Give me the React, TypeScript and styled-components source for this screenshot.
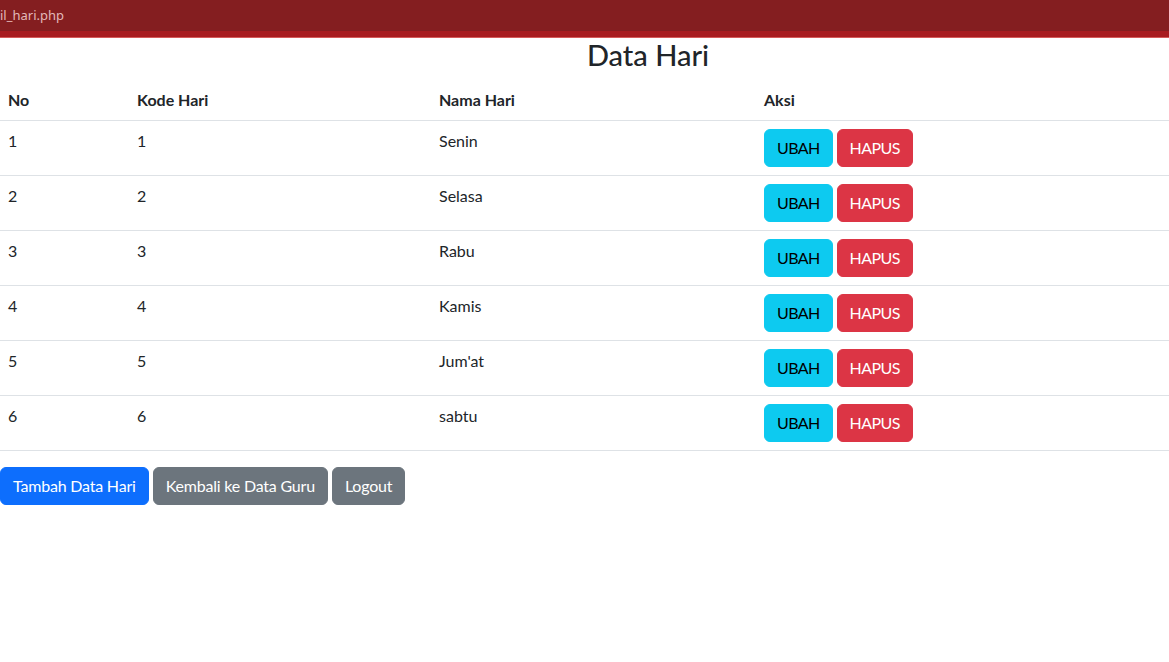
import React from "react";
import styled, { createGlobalStyle } from "styled-components";

const Global = createGlobalStyle`
  html, body { margin: 0; padding: 0; background: #fff; }
  body {
    font-family: Lato, "Noto Sans", sans-serif;
    color: #212529;
    overflow: hidden;
  }
`;

const Viewport = styled.div`
  width: 1169px;
  height: 662px;
  overflow: hidden;
  background: #fff;
`;

const TitleBar = styled.div`
  height: 31px;
  background: #841e20;
  display: flex;
  align-items: center;
  padding-bottom: 2px;
  box-sizing: border-box;
`;

const TitleText = styled.span`
  font-family: "Noto Sans", sans-serif;
  font-size: 13px;
  color: #e2b9b9;
`;

const TabStrip = styled.div`
  height: 6px;
  background: #a81c20;
  border-bottom: 1px solid #d65a5a;
`;

const Container = styled.div`
  width: 1296px;
`;

const Heading = styled.h3`
  margin: 0 0 8px;
  text-align: center;
  font-size: 29px;
  font-weight: 500;
  line-height: 34px;
  color: #212529;
`;

const Table = styled.table`
  width: 100%;
  border-collapse: collapse;
  margin-bottom: 16px;
  font-size: 16px;
  line-height: 24px;
`;

const Th = styled.th<{ $w?: number }>`
  text-align: left;
  font-weight: 700;
  padding: 8px;
  border-bottom: 1px solid #dee2e6;
  width: ${(p) => (p.$w ? `${p.$w}px` : "auto")};
  box-sizing: border-box;
`;

const Td = styled.td`
  padding: 8px;
  vertical-align: top;
  border-bottom: 1px solid #dee2e6;
`;

const Actions = styled.div`
  display: flex;
  gap: 4px;
`;

const Btn = styled.button<{ $bg: string; $fg: string; $tight?: boolean }>`
  font-family: inherit;
  font-size: 16px;
  line-height: 24px;
  padding: 6px 12px;
  border: 1px solid ${(p) => p.$bg};
  border-radius: 6px;
  background: ${(p) => p.$bg};
  color: ${(p) => p.$fg};
  cursor: pointer;
  letter-spacing: ${(p) => (p.$tight ? "-0.6px" : "-0.2px")};
`;

const Footer = styled.div`
  display: flex;
  gap: 4px;
`;

const rows = [
  ["1", "1", "Senin"],
  ["2", "2", "Selasa"],
  ["3", "3", "Rabu"],
  ["4", "4", "Kamis"],
  ["5", "5", "Jum'at"],
  ["6", "6", "sabtu"],
];

export default function App() {
  return (
    <Viewport>
      <Global />
      <TitleBar>
        <TitleText>il_hari.php</TitleText>
      </TitleBar>
      <TabStrip />
      <Container>
        <Heading>Data Hari</Heading>
        <Table>
          <thead>
            <tr>
              <Th $w={129}>No</Th>
              <Th $w={302}>Kode Hari</Th>
              <Th $w={325}>Nama Hari</Th>
              <Th>Aksi</Th>
            </tr>
          </thead>
          <tbody>
            {rows.map((r) => (
              <tr key={r[0]}>
                <Td>{r[0]}</Td>
                <Td>{r[1]}</Td>
                <Td>{r[2]}</Td>
                <Td>
                  <Actions>
                    <Btn $bg="#0dcaf0" $fg="#000" $tight>UBAH</Btn>
                    <Btn $bg="#dc3545" $fg="#fff" $tight>HAPUS</Btn>
                  </Actions>
                </Td>
              </tr>
            ))}
          </tbody>
        </Table>
        <Footer>
          <Btn $bg="#0d6efd" $fg="#fff">Tambah Data Hari</Btn>
          <Btn $bg="#6c757d" $fg="#fff">Kembali ke Data Guru</Btn>
          <Btn $bg="#6c757d" $fg="#fff">Logout</Btn>
        </Footer>
      </Container>
    </Viewport>
  );
}
